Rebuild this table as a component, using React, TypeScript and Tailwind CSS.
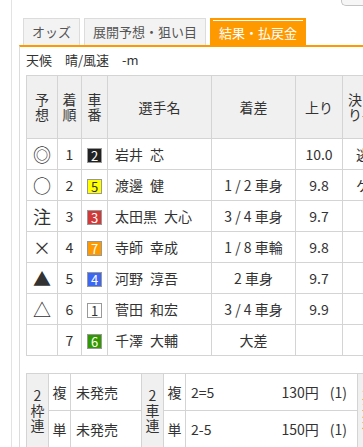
import React from 'react';

interface ResultRow {
  mark: string;
  rank: number;
  car: number;
  name: [string, string];
  diff: string;
  agari: string;
  kimari: string;
}

const rows: ResultRow[] = [
  { mark: '◎', rank: 1, car: 2, name: ['岩井', '芯'], diff: '', agari: '10.0', kimari: '逃げ' },
  { mark: '○', rank: 2, car: 5, name: ['渡邊', '健'], diff: '1 / 2 車身', agari: '9.8', kimari: 'ケ' },
  { mark: '注', rank: 3, car: 3, name: ['太田黒', '大心'], diff: '3 / 4 車身', agari: '9.7', kimari: '' },
  { mark: '×', rank: 4, car: 7, name: ['寺師', '幸成'], diff: '1 / 8 車輪', agari: '9.8', kimari: '' },
  { mark: '▲', rank: 5, car: 4, name: ['河野', '淳吾'], diff: '2 車身', agari: '9.7', kimari: '' },
  { mark: '△', rank: 6, car: 1, name: ['菅田', '和宏'], diff: '3 / 4 車身', agari: '9.9', kimari: '' },
  { mark: '', rank: 7, car: 6, name: ['千澤', '大輔'], diff: '大差', agari: '', kimari: '' },
];

const carColor = (car: number) => {
  switch (car) {
    case 1:
      return 'bg-white text-[#333]';
    case 2:
      return 'bg-[#222] text-white';
    case 3:
      return 'bg-[#d23a3a] text-white';
    case 4:
      return 'bg-[#3d66f2] text-white';
    case 5:
      return 'bg-[#ffff00] text-[#333]';
    case 6:
      return 'bg-[#339900] text-white';
    default:
      return 'bg-[#ff9900] text-white';
  }
};

const th = 'border border-[#d4d4d4] bg-[#f0f0f0] font-normal text-center leading-[15px] p-0';
const td = 'border border-[#d4d4d4] h-[31px] p-0 text-center';
const cell = 'border border-[#d4d4d4] h-[37px] p-0';

export default function App() {
  return (
    <div className="w-[363px] h-[447px] overflow-hidden bg-white text-[#333] font-['Noto_Sans_CJK_JP',sans-serif]">
      <div className="ml-[11px] h-full border-l border-[#e3e3e3]">
        <div className="flex justify-end h-[6px]">
          <div className="w-[22px] h-[6px] border border-t-0 border-r-0 border-[#c4c4c4] rounded-bl-[5px] bg-[#f6f6f6]" />
        </div>

        <div className="pl-[7px] mt-[12px]">
          {/* tabs */}
          <div className="flex gap-[4px] ml-[4px] h-[27px] text-[13px] leading-[25px]">
            <div className="w-[57px] border border-b-0 border-[#dcdcdc] bg-[#f3f3f3] text-[#555] text-center">オッズ</div>
            <div className="w-[122px] border border-b-0 border-[#dcdcdc] bg-[#f3f3f3] text-[#555] text-center">展開予想・狙い目</div>
            <div className="w-[96px] border-t-2 border-x-[3px] border-[#ff9900] bg-[#ff9900] text-white text-center shadow-[inset_0_1px_0_#fff]">
              結果・払戻金
            </div>
          </div>

          {/* panel */}
          <div className="border-t-2 border-t-[#ff9900] border-l border-l-[#dcdcdc] pl-[6px] h-[420px]">
            <div className="h-[28px] pt-[3px] text-[13px] leading-[20px] whitespace-pre">天候　晴/風速　-m</div>

            <table className="table-fixed border-collapse w-[366px] text-[14px]">
              <colgroup>
                <col className="w-[31px]" />
                <col className="w-[24px]" />
                <col className="w-[26px]" />
                <col className="w-[104px]" />
                <col className="w-[84px]" />
                <col className="w-[47px]" />
                <col className="w-[50px]" />
              </colgroup>
              <thead>
                <tr>
                  <th className={`${th} h-[63px]`}>予<br />想</th>
                  <th className={th}>着<br />順</th>
                  <th className={th}>車<br />番</th>
                  <th className={th}>選手名</th>
                  <th className={th}>着差</th>
                  <th className={th}>上り</th>
                  <th className={`${th} text-left pl-[5px]`}>決ま<br />り手</th>
                </tr>
              </thead>
              <tbody>
                {rows.map((r) => (
                  <tr key={r.rank}>
                    <td className={`${td} text-[18px] leading-[20px]`}>{r.mark}</td>
                    <td className={td}>{r.rank}</td>
                    <td className={td}>
                      <span
                        className={`inline-flex w-[15px] h-[15px] items-center justify-center border border-[#999] text-[13px] leading-[13px] align-middle ${carColor(r.car)}`}
                      >
                        {r.car}
                      </span>
                    </td>
                    <td className={`${td} text-left pl-[7px] whitespace-pre`}>
                      {r.name[0]}
                      {'\u2002'}
                      {r.name[1]}
                    </td>
                    <td className={`${td} whitespace-pre`}>{r.diff}</td>
                    <td className={td}>{r.agari}</td>
                    <td className={`${td} text-left pl-[13px]`}>{r.kimari}</td>
                  </tr>
                ))}
              </tbody>
            </table>

            {/* payouts */}
            <table className="table-fixed border-collapse w-[370px] mt-[17px] text-[14px]">
              <colgroup>
                <col className="w-[22px]" />
                <col className="w-[22px]" />
                <col className="w-[71px]" />
                <col className="w-[22px]" />
                <col className="w-[22px]" />
                <col className="w-[172px]" />
                <col className="w-[39px]" />
              </colgroup>
              <tbody>
                <tr>
                  <td rowSpan={2} className={`${cell} bg-[#f0f0f0] text-center leading-[15px]`}>
                    2<br />枠<br />連
                  </td>
                  <td className={`${cell} text-center`}>複</td>
                  <td className={`${cell} pl-[5px]`}>未発売</td>
                  <td rowSpan={2} className={`${cell} bg-[#f0f0f0] text-center leading-[15px]`}>
                    2<br />車<br />連
                  </td>
                  <td className={`${cell} text-center`}>複</td>
                  <td className={`${cell} pl-[5px] pr-[10px]`}>
                    <div className="flex justify-between">
                      <span>2=5</span>
                      <span>
                        130円<span className="ml-[11px]">(1)</span>
                      </span>
                    </div>
                  </td>
                  <td rowSpan={2} className={`${cell} bg-[#f0f0f0] text-[#e07800] leading-[15px] pl-[4px]`}>
                    3<br />連<br />複
                  </td>
                </tr>
                <tr>
                  <td className={`${cell} text-center`}>単</td>
                  <td className={`${cell} pl-[5px]`}>未発売</td>
                  <td className={`${cell} text-center`}>単</td>
                  <td className={`${cell} pl-[5px] pr-[10px]`}>
                    <div className="flex justify-between">
                      <span>2-5</span>
                      <span>
                        150円<span className="ml-[11px]">(1)</span>
                      </span>
                    </div>
                  </td>
                </tr>
              </tbody>
            </table>
          </div>
        </div>
      </div>
    </div>
  );
}
